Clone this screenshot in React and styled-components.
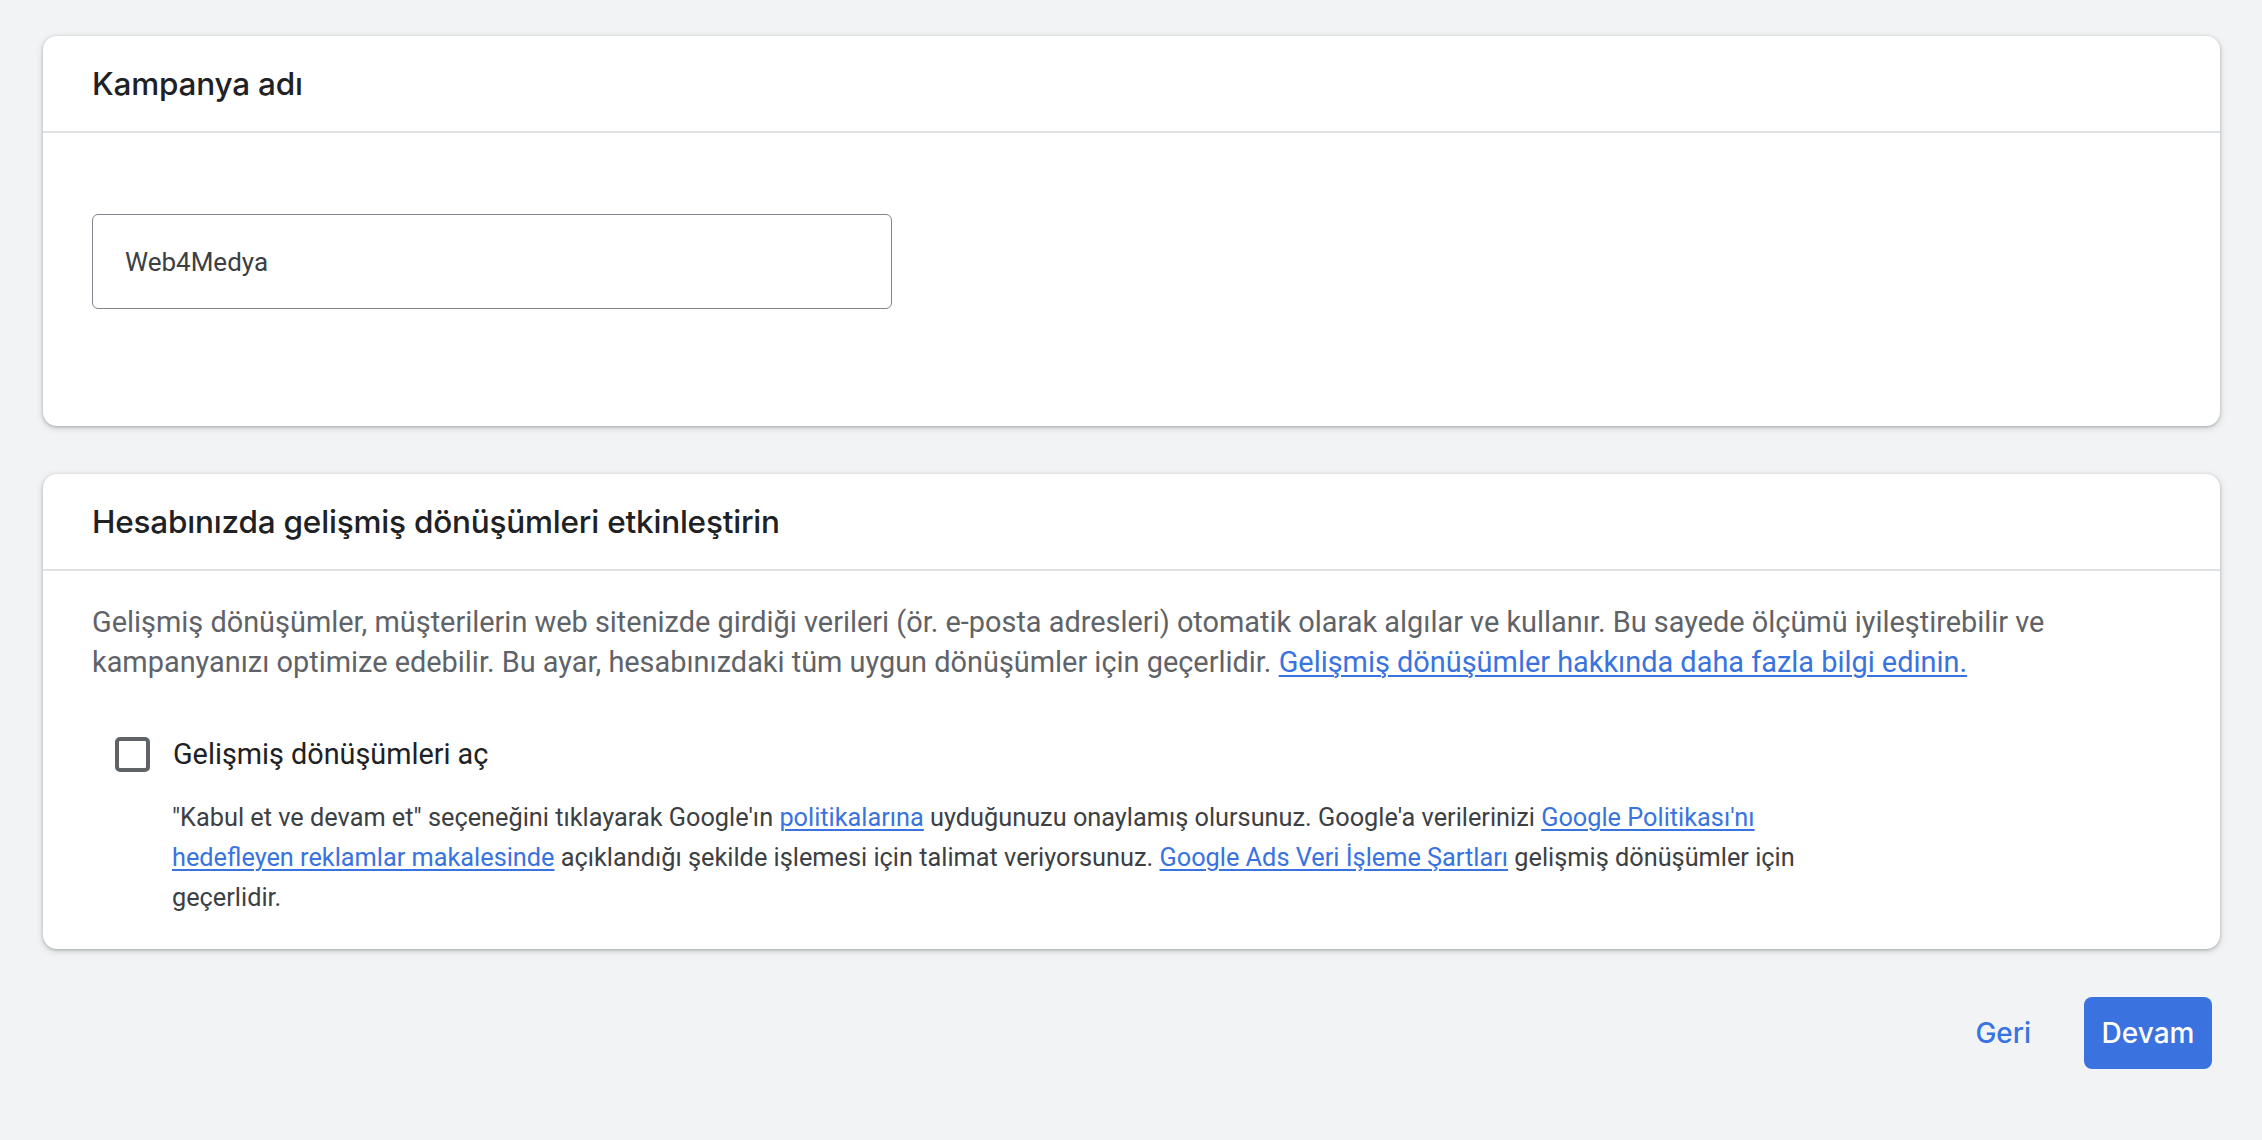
import React from 'react';
import styled, { createGlobalStyle } from 'styled-components';

const GlobalStyle = createGlobalStyle`
  html, body {
    margin: 0;
    padding: 0;
    background: #f1f3f4;
  }
  body {
    font-family: Roboto, "Liberation Sans", Arial, sans-serif;
  }
`;

const App = () => {
  return (
    <>
      <GlobalStyle />
      <Page>
        <Card>
          <CardHeader>
            <Title>Kampanya adı</Title>
          </CardHeader>
          <NameBody>
            <NameInput defaultValue='Web4Medya' />
          </NameBody>
        </Card>

        <Card>
          <CardHeader>
            <Title>Hesabınızda gelişmiş dönüşümleri etkinleştirin</Title>
          </CardHeader>
          <ConvBody>
            <Description>
              Gelişmiş dönüşümler, müşterilerin web sitenizde girdiği verileri (ör. e-posta adresleri)
              otomatik olarak algılar ve kullanır. Bu sayede ölçümü iyileştirebilir ve kampanyanızı
              optimize edebilir. Bu ayar, hesabınızdaki tüm uygun dönüşümler için geçerlidir.{' '}
              <Link href='#'>Gelişmiş dönüşümler hakkında daha fazla bilgi edinin.</Link>
            </Description>
            <CheckRow>
              <Box />
              <CheckLabel>Gelişmiş dönüşümleri aç</CheckLabel>
            </CheckRow>
            <Terms>
              "Kabul et ve devam et" seçeneğini tıklayarak Google'ın{' '}
              <Link href='#'>politikalarına</Link> uyduğunuzu onaylamış olursunuz. Google'a
              verilerinizi <Link href='#'>Google Politikası'nı hedefleyen reklamlar makalesinde</Link>{' '}
              açıklandığı şekilde işlemesi için talimat veriyorsunuz.{' '}
              <Link href='#'>Google Ads Veri İşleme Şartları</Link> gelişmiş dönüşümler için
              geçerlidir.
            </Terms>
          </ConvBody>
        </Card>

        <Actions>
          <TextButton>Geri</TextButton>
          <PrimaryButton>Devam</PrimaryButton>
        </Actions>
      </Page>
    </>
  );
};

export default App;

const Page = styled.div`
  display: flex;
  flex-direction: column;
  gap: 48px;
  padding: 36px 42px 40px 43px;
`;

const Card = styled.section`
  background: #fff;
  border-radius: 14px;
  box-shadow: 0 1px 3px rgba(60, 64, 67, 0.32), 0 2px 6px 1px rgba(60, 64, 67, 0.14);
  overflow: hidden;
`;

const CardHeader = styled.div`
  padding: 28px 49px 27px;
  border-bottom: 2px solid #e0e1e5;
`;

const Title = styled.h2`
  margin: 0;
  font-family: Inter, "Open Sans", sans-serif;
  font-size: 31.5px;
  font-weight: 500;
  line-height: 40px;
  color: #202124;
  letter-spacing: -0.2px;
`;

const NameBody = styled.div`
  padding: 81px 49px 117px;
`;

const NameInput = styled.input`
  display: block;
  box-sizing: border-box;
  width: 800px;
  height: 95px;
  padding: 0 32px;
  border: 1.5px solid #80868b;
  border-radius: 6px;
  font-family: Roboto, sans-serif;
  font-size: 26px;
  color: #3c4043;
  outline: none;
  background: #fff;
`;

const ConvBody = styled.div`
  padding: 31px 49px 31px;
`;

const Description = styled.p`
  margin: 0;
  font-size: 28.9px;
  line-height: 40px;
  color: #5f6368;
`;

const Link = styled.a`
  color: #3873e0;
  text-decoration: underline;
  text-decoration-thickness: 2px;
  text-underline-offset: 3px;
`;

const CheckRow = styled.div`
  display: flex;
  align-items: center;
  gap: 23px;
  height: 58px;
  margin: 43px 0 15px;
  padding-left: 23px;
`;

const Box = styled.span`
  box-sizing: border-box;
  width: 35px;
  height: 35px;
  border: 4px solid #5f6368;
  border-radius: 5px;
`;

const CheckLabel = styled.span`
  font-size: 28.8px;
  line-height: 40px;
  color: #202124;
`;

const Terms = styled.p`
  margin: 0 0 0 80px;
  max-width: 1665px;
  font-size: 25.3px;
  line-height: 40px;
  color: #3c4043;
`;

const Actions = styled.div`
  display: flex;
  justify-content: flex-end;
  align-items: center;
  gap: 36px;
  padding-right: 8px;
`;

const TextButton = styled.button`
  height: 72px;
  padding: 0 17px;
  border: none;
  background: transparent;
  font-family: Inter, "Open Sans", sans-serif;
  font-size: 28px;
  font-weight: 500;
  color: #3873e0;
  cursor: pointer;
`;

const PrimaryButton = styled(TextButton)`
  width: 128px;
  padding: 0;
  border-radius: 8px;
  background: #3a72e0;
  color: #fff;
`;
